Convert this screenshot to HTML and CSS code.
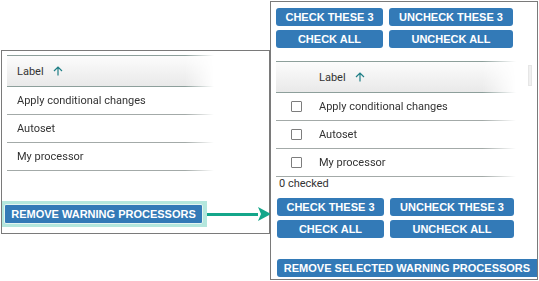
FILE: index.html
```html
<!DOCTYPE html>
<html lang="en">
<head>
    <meta charset="UTF-8">
    <title>Remove warning processors</title>
    <link rel="stylesheet" href="styles.css">
</head>
<body>

<div class="stage">
    <section class="panel panel-before">
        <div class="grid">
            <div class="grid-head">
                <span class="col-label">Label</span>
                <svg class="sort-icon" width="10" height="10" viewBox="0 0 10 10"><path d="M5 9.5V1M1 5l4-4 4 4" fill="none" stroke="#1f7f86" stroke-width="1.2"/></svg>
            </div>
            <div class="grid-row"><span class="col-label">Apply conditional changes</span></div>
            <div class="grid-row"><span class="col-label">Autoset</span></div>
            <div class="grid-row"><span class="col-label">My processor</span></div>
        </div>

        <div class="action-row">
            <span class="highlight">
                <button class="btn btn-remove">REMOVE WARNING PROCESSORS</button>
            </span>
            <span class="arrow">
                <span class="arrow-line"></span>
                <svg width="13" height="14" viewBox="0 0 13 14"><path d="M0 0L13 7L0 14L3 7Z" fill="#14a68a"/></svg>
            </span>
        </div>
    </section>

    <section class="panel panel-after">
        <div class="btn-grid">
            <button class="btn">CHECK THESE 3</button>
            <button class="btn">UNCHECK THESE 3</button>
            <button class="btn">CHECK ALL</button>
            <button class="btn">UNCHECK ALL</button>
        </div>

        <div class="grid-wrap">
            <div class="grid grid-check">
                <div class="grid-head">
                    <span class="col-check"></span>
                    <span class="col-label">Label</span>
                    <svg class="sort-icon" width="10" height="10" viewBox="0 0 10 10"><path d="M5 9.5V1M1 5l4-4 4 4" fill="none" stroke="#1f7f86" stroke-width="1.2"/></svg>
                </div>
                <div class="grid-row"><span class="col-check"><span class="checkbox"></span></span><span class="col-label">Apply conditional changes</span></div>
                <div class="grid-row"><span class="col-check"><span class="checkbox"></span></span><span class="col-label">Autoset</span></div>
                <div class="grid-row"><span class="col-check"><span class="checkbox"></span></span><span class="col-label">My processor</span></div>
            </div>
            <div class="scroll-strip"></div>
        </div>

        <div class="count">0 checked</div>

        <div class="btn-grid btn-grid-bottom">
            <button class="btn">CHECK THESE 3</button>
            <button class="btn">UNCHECK THESE 3</button>
            <button class="btn">CHECK ALL</button>
            <button class="btn">UNCHECK ALL</button>
        </div>

        <button class="btn btn-wide">REMOVE SELECTED WARNING PROCESSORS</button>
    </section>
</div>

</body>
</html>
```

FILE: styles.css
```css
* {
    margin: 0;
    padding: 0;
    box-sizing: border-box;
}

body {
    font-family: 'Roboto', sans-serif;
    background: #fff;
    color: #333;
    width: 539px;
    height: 281px;
    overflow: hidden;
}

.stage {
    display: flex;
    align-items: flex-start;
    padding: 1px 0 0 1px;
}

.panel {
    border: 1px solid #7a7a7a;
    background: #fff;
}

.panel-before {
    width: 269px;
    margin-top: 49px;
    padding: 4px 0 6px 0;
}

.panel-after {
    width: 268px;
    height: 279px;
    padding: 6px 0 0 5px;
}

/* grid */

.grid {
    width: 207px;
    margin-left: 5px;
    font-size: 11px;
    -webkit-mask-image: linear-gradient(to right, #000 86%, transparent 100%);
    mask-image: linear-gradient(to right, #000 86%, transparent 100%);
}

.grid-head {
    display: flex;
    align-items: center;
    height: 32px;
    border-top: 1px solid #8d9f9b;
    border-bottom: 1px solid #8d9f9b;
    background: linear-gradient(#fcfcfc, #e9e9e9);
}

.grid-row {
    display: flex;
    align-items: center;
    height: 28px;
    border-bottom: 1px solid #a3aaa8;
}

.col-label {
    padding-left: 10px;
}

.sort-icon {
    margin-left: 9px;
}

.grid-wrap {
    display: flex;
    align-items: flex-start;
    margin-top: 13px;
}

.grid-check {
    width: 240px;
    margin-left: 0;
}

.grid-check .grid-row:first-of-type {
    height: 27px;
}

.grid-check .col-label {
    padding-left: 0;
}

.col-check {
    width: 43px;
    display: flex;
    padding-left: 15px;
}

.checkbox {
    width: 11px;
    height: 11px;
    border: 1px solid #7d7d7d;
    border-radius: 1px;
    background: #fff;
}

.scroll-strip {
    width: 4px;
    height: 21px;
    margin: 4px 0 0 12px;
    background: #f0f0f0;
    border: 1px solid #e6e6e6;
}

.count {
    font-size: 11px;
    line-height: 14px;
    padding-left: 3px;
    margin-top: 0;
}

/* buttons */

.btn {
    font-family: 'Liberation Sans', Arial, sans-serif;
    font-size: 11px;
    font-weight: 700;
    color: #fff;
    background-color: #337ab7;
    border: none;
    border-radius: 3px;
    height: 18px;
    line-height: 18px;
    text-align: center;
    cursor: pointer;
    white-space: nowrap;
}

.btn-grid {
    display: grid;
    grid-template-columns: 107px 124px;
    grid-auto-rows: 18px;
    gap: 4px 6px;
}

.btn-grid-bottom {
    margin-top: 7px;
    margin-left: 1px;
}

.btn-wide {
    display: block;
    width: 260px;
    margin: 21px 0 0 1px;
    padding: 0 6px;
    border-radius: 3px 0 0 3px;
}

.action-row {
    display: flex;
    align-items: center;
    margin-top: 30px;
}

.highlight {
    display: inline-flex;
    padding: 3px 4px 3px 2px;
    background: #b4e7dd;
}

.btn-remove {
    width: 199px;
    height: 20px;
    line-height: 18px;
    border: 1px solid #e4f5f1;
    border-radius: 2px;
}

.arrow {
    flex: 1;
    display: flex;
    align-items: center;
    margin-right: -2px;
}

.arrow-line {
    flex: 1;
    height: 3px;
    background: #14a68a;
}
```
